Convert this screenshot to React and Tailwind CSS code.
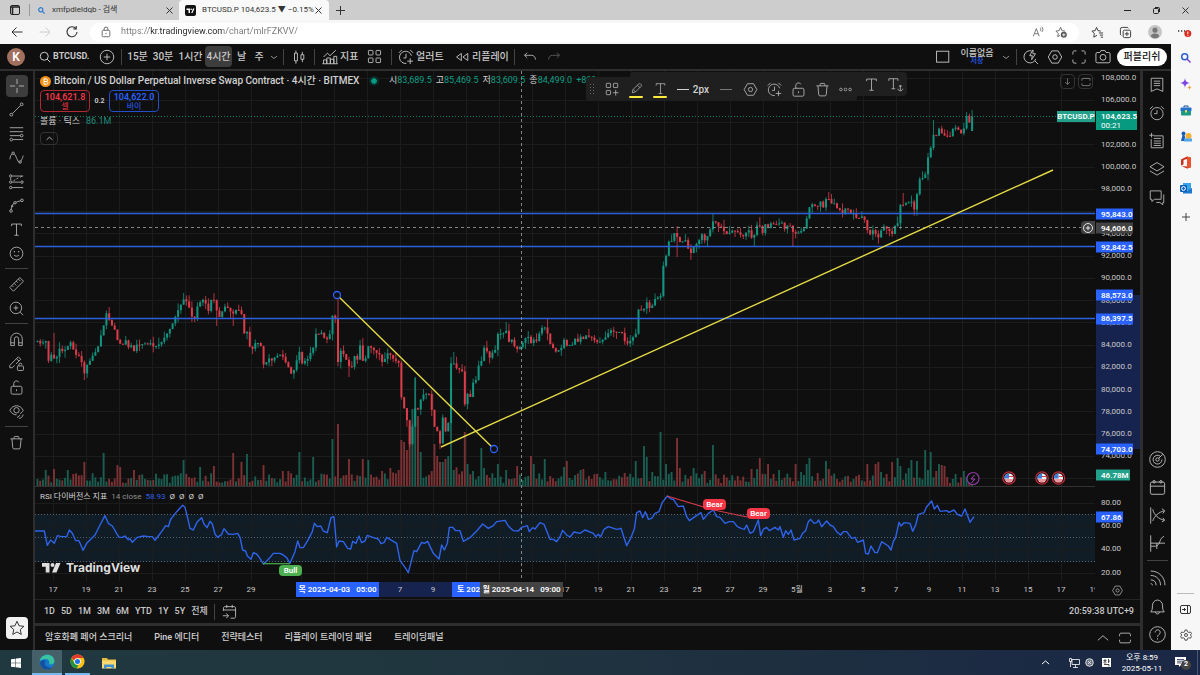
import React from "react";

/* ---------- chart data ---------- */

// Chart space: x 35..1095, y 71..581. Traces are stored as runs of
// "x,y" pairs in thirds of a unit, relative to the origin of their run.
const trace = (runs) =>
  runs.flatMap(([ox, oy, text]) =>
    text.split(" ").map((pair) => {
      const [x, y] = pair.split(",").map(Number);
      return [ox + x / 3, oy + y / 3];
    })
  );

const PRICE = trace([
  [0, 140, "105,606 140,606 144,672 152,640 167,665 175,628 183,632 192,630 200,633 208,600 217,618 225,648 240,645 252,700 260,678 270,660 283,645 292,632 300,595 310,565 318,517 325,530 331,555 343,565 352,595 358,612 372,612 375,600 385,620 395,620 400,635 410,617 425,612 433,608 445,612 457,615 465,625 475,615 487,605 497,590 505,580 515,555 525,535 533,515 540,497 548,475 556,478 565,490 573,530 583,535 592,500 600,490 608,480 617,495 625,512 634,480 645,483 652,528 660,530 668,510 675,498 683,500 692,520 700,522 708,510 718,515 727,525 733,578 742,578 748,620 757,625 768,605 775,610 785,625 790,672 798,672 805,660 818,660 828,650 838,645 850,655 860,668 868,690 875,700 885,685"],
  [290, 270, "5,310 15,290 27,245 37,280 50,272 60,250 70,235 76,187 85,195 97,190 107,212 117,212 125,140 135,132 143,280 152,245 165,250 175,290 185,297 193,255 202,268 210,228 218,270 228,265 235,225 245,238 257,245 268,250 275,275 285,268 295,247 307,260 320,272 328,280 333,375 342,410 350,440 358,525 367,475 374,415 382,428 390,398 398,372 408,370 415,362 423,410 432,465 445,490 450,525 457,437 467,488 475,455 480,290 488,275 497,290 507,300 516,298 523,405 530,375 543,380 548,340 558,325 565,290 575,275 580,232 590,240 600,265 608,245 617,240 623,195 635,190 648,182 655,212 667,210 677,235 690,235 700,210 715,200 720,228 730,205 740,210 750,185 760,172 770,180 780,220 790,238 803,245 812,240 820,200 830,228 847,225 855,205 865,215 875,200"],
  [580, 270, "5,212 15,195 25,200 45,210 55,213 70,213 80,190 90,185 110,190 125,188 133,205 140,228 150,215 160,205 170,185 173,118 182,115 190,130 197,93 207,112 217,110 223,88 240,77"],
  [580, 180, "245,345 248,260 255,250 265,185 272,195 280,160 290,170 297,190 307,185 314,175 322,205 333,222 345,195 355,185 365,165 373,185 383,165 390,150 395,130 405,125 415,140 425,140 440,160 450,155 465,150 480,158 490,172 505,150 515,170 525,165 535,120 545,170 555,130 562,150 575,128 590,133 605,120 612,155 620,135 630,132 640,160 650,160 665,155 675,135 685,90 693,70 710,80 720,65 730,85 740,55 750,65 765,75 780,90 790,100 797,85 815,100 830,110 853,115 860,150 870,160 880,145 890,170"],
  [880, 90, "0,440 7,408 17,415 25,420 35,440 45,410 55,400 60,340 70,350 80,335 95,333 102,362 108,335 117,265 135,258 142,208 150,190 158,122 166,150 175,115 183,132 192,135 200,140 212,135 222,110 230,120 240,128 250,130 258,72 265,90 275,118 282,80"],
]);

const RSI = trace([
  [0, 480, "105,153 133,153 142,196 152,180 163,190 172,167 185,170 200,170 208,150 217,160 227,182 237,182 249,211 260,190 270,180 285,165 300,135 315,107 325,130 337,138 357,172 367,172 375,168 385,179 390,176 397,187 412,172 430,168 445,170 457,170 465,181 475,168 487,152 497,137 505,140 512,118 530,95 548,76 555,82 562,110 570,145 580,150 592,125 605,113 612,132 621,143 630,124 637,132 645,162 653,172 665,163 672,146 685,162 700,163 713,160 720,172 728,210 737,213 742,228 753,238 760,218 770,222 780,235 790,252 800,243 808,235 820,220 840,220 850,225 860,233 870,250 885,215 893,183"],
  [300, 480, "0,203 10,203 25,178 37,155 43,130 52,140 62,138 70,153 82,158 93,113 102,110 110,201 117,183 130,185 143,205 152,207 158,184 168,190 177,168 185,188 195,183 202,166 220,173 235,177 243,191 252,188 260,172 290,190 300,241 315,262 325,278 342,212 350,215 365,187 373,190 383,184 400,220 417,237 425,195 433,210 442,190 448,142 458,142 467,152 480,152 490,184 510,173 530,153 548,132 565,145 580,137 590,125 615,121 625,138 640,152 655,153 665,142 682,137 688,155 698,143 705,147 720,128 732,133 750,178 760,178 770,185 780,170 788,151 800,165 810,171 822,156 840,160 855,150 880,160 887,170 895,163"],
  [600, 480, "2,170 12,148 25,140 50,148 63,145 80,197 92,175 103,147 110,98 120,93 128,113 136,95 145,118 155,115 165,100 177,95 187,67 202,48 213,57 220,58 235,80 250,78 260,110 268,122 285,110 303,98 310,118 325,100 340,90 350,110 360,112 375,130 388,125 400,125 412,140 425,146 433,148 440,135 450,160 460,155 475,120 482,167 490,148 500,142 508,152 525,142 535,150 540,140 550,172 557,152 565,163 573,150 582,180 600,175 608,160 617,152 625,125 632,118 642,130 650,128 656,120 665,140 680,123 690,135 700,140 710,155 722,165 730,155 740,155 755,175 765,172 773,187 790,180 797,220 805,222 813,198 825,218 832,218"],
  [880, 320, "5,665 25,678 33,690 40,665 47,652 57,607 63,618 72,608 90,610 98,634 107,615 115,583 132,578 140,560 155,543 163,567 172,556 180,574 200,572 207,577 222,570 232,583 245,588 255,567 270,607 282,590"],
]);

// Long wicks: [x, y of the tip]
const WICKS = [
  [53, 333], [108, 307], [183, 293], [218, 326], [232, 326], [84, 378], [337, 299], [348, 377],
  [409, 447], [415, 377], [362, 338], [450, 357], [453, 352], [463, 364], [506, 322], [547, 318],
  [678, 226], [678, 257], [692, 260], [712, 213], [753, 247], [794, 247], [760, 217], [828, 192],
  [902, 193], [933, 120], [966, 112], [440, 449],
];

// Tall volume bars: origin, then [thirds of a unit, height]
const VOLUME_PEAKS = [
  [0, "140,16 158,17 200,16 250,24 308,33 350,21 357,19 399,16 547,26 597,19 645,20 697,33 727,24 745,32 787,21 852,15 862,15 895,34"],
  [290, "27,34 73,29 125,47 140,62 173,27 215,27 222,49 232,26 273,15 323,16 331,46 339,44 347,36 357,60 366,77 374,108 382,70 390,34 430,42 438,30 446,24 455,24 463,27 471,30 480,65 488,16 521,54 530,22 547,15 570,38 580,18 620,22 645,16 685,20 720,30 728,22 768,27 820,19 828,25 868,16 877,17"],
  [580, "5,17 80,14 138,13 170,25 195,40 203,29 220,14 245,54 255,22 262,32 276,14 295,48 303,18 337,18 345,20 370,15 395,41 403,14 518,17 535,17 543,28 567,22 600,16 643,22 665,14 683,22 690,28 740,25 750,17 858,22 865,18 890,22 905,14"],
  [880, "-1,24 5,14 40,24 55,28 65,20 90,18 98,26 113,25 138,36 147,16 155,34 170,15 180,22 188,21 195,20 230,12 255,15"],
].flatMap(([ox, text]) =>
  text.split(" ").map((pair) => {
    const [x, h] = pair.split(",").map(Number);
    return [ox + x / 3, h];
  })
);

const noise = (n) => {
  const v = Math.sin(n * 127.1 + 31.7) * 43758.5453;
  return v - Math.floor(v);
};

const sample = (points, x) => {
  if (x <= points[0][0]) return points[0][1];
  for (let i = 1; i < points.length; i++) {
    if (x <= points[i][0]) {
      const [x0, y0] = points[i - 1];
      const [x1, y1] = points[i];
      return y0 + ((y1 - y0) * (x - x0)) / (x1 - x0 || 1);
    }
  }
  return points[points.length - 1][1];
};

const STEP = 2.757;
const CANDLES = Array.from({ length: 340 }, (_, i) => {
  const x = 37.5 + i * STEP;
  const last = i === 339;
  const open = last ? 131 : sample(PRICE, x - STEP) + (noise(i - 1) - 0.5) * 3;
  const close = last ? 116.5 : sample(PRICE, x) + (noise(i) - 0.5) * 3;
  let high = Math.min(open, close) - noise(i + 500) ** 2 * 7;
  let low = Math.max(open, close) + (last ? 0 : noise(i + 900) ** 2 * 7);
  for (const [wx, wy] of WICKS) {
    if (Math.abs(wx - x) < STEP / 2) {
      high = Math.min(high, wy);
      low = Math.max(low, wy);
    }
  }
  const peak = VOLUME_PEAKS.find(([px]) => Math.abs(px - x) <= STEP / 2);
  const busy = x > 390 && x < 480 ? 8 : 0;
  const volume = peak ? peak[1] : 3 + noise(i + 1300) * 10 + busy * noise(i + 70);
  return { x, open, close, high, low, volume, up: close <= open };
});

const GRID_X = [
  ...Array.from({ length: 7 }, (_, i) => 53 + i * 33.07),
  ...Array.from({ length: 24 }, (_, i) => 301 + i * 33.07),
];
const HIDDEN_TICKS = ["104,000.0", "96,000.0"];
const PRICE_TICKS = Array.from({ length: 18 }, (_, i) => ({
  value: `${108 - i * 2},000.0`,
  y: 78 + i * 22.25,
})).filter((t) => !HIDDEN_TICKS.includes(t.value));
const RSI_TICKS = [["80.00", 503], ["60.00", 526], ["40.00", 549], ["20.00", 573]];
const DAYS = [
  ["17", 53], ["19", 86], ["21", 119], ["23", 152], ["25", 185], ["27", 218], ["29", 251],
  ["7", 400], ["9", 433], ["17", 565], ["19", 598], ["21", 631], ["23", 664], ["25", 697],
  ["27", 730], ["29", 763], ["5월", 797], ["3", 830], ["5", 863], ["7", 896], ["9", 929],
  ["11", 962], ["13", 995], ["15", 1028], ["17", 1061], ["19", 1094],
];
const left = (x) => `${((x - 35) / 1060) * 100}%`;
const top = (y) => `${((y - 71) / 510) * 100}%`;

/* ---------- icons ---------- */

const Icon = ({ children, size = 18, w = 1.4, className = "" }) => (
  <svg width={size} height={size} viewBox="0 0 28 28" fill="none" stroke="currentColor" strokeWidth={w} className={`shrink-0 ${className}`} aria-hidden="true">
    {children}
  </svg>
);

const I = {
  cross: <path d="M14 3v8M14 17v8M3 14h8M17 14h8" />,
  trend: <><path d="M7.5 20.5l13-13" /><circle cx="5.5" cy="22.5" r="2.3" /><circle cx="22.5" cy="5.5" r="2.3" /></>,
  fib: <><path d="M3 4.5h22M3 11h22M3 17.5h17M8 24h17" /><circle cx="22.5" cy="17.5" r="2.2" /><circle cx="5.5" cy="24" r="2.2" /></>,
  wave: <><path d="M3 17c1-6 2-8 4-9M10 8c4 3 5 13 9 14M21 20c2-3 3-5 4-9" /><circle cx="8.5" cy="7" r="2" /><circle cx="20" cy="21.5" r="2" /></>,
  forecast: <><path d="M7 5h18M7 15h13M7 24h18M4.5 8v4M9 13l3-2M14 10l3-2M20 7l3-2" /><circle cx="4.5" cy="5" r="2" /><circle cx="4.5" cy="15" r="2" /><circle cx="4.5" cy="24" r="2" /><circle cx="23" cy="15" r="2" /></>,
  brush: <><path d="M5 21c1-6 3-9 5-11M13.5 8.500L21 6" /><circle cx="5" cy="23" r="2.200" /><circle cx="11.500" cy="9.500" r="2" /><circle cx="7" cy="15" r="1.200" /><circle cx="23" cy="5.500" r="2.200" /></>,
  text: <path d="M6 8.500V5h16v3.500M14 5v18.500M10.500 23.500h7" />,
  smile: <><circle cx="14" cy="14" r="10.500" /><path d="M10 16.500c1 2.500 7 2.500 8 0" /><path d="M10.500 11h.1M17.500 11h.1" strokeLinecap="round" strokeWidth="2.200" /></>,
  ruler: <path d="M3 19L19.500 2.500l6 6L9 25zM6.500 15.500l2.500 2.500M10 12l3.500 3.500M13.500 8.500L16 11M17 5l3.500 3.500" strokeLinejoin="round" />,
  zoom: <><circle cx="13" cy="13" r="9.500" /><path d="M20 20l5 5M13 9v8M9 13h8" /></>,
  magnet: <path d="M4.500 24V13a9.500 9.500 0 0119 0v11h-6V13a3.500 3.500 0 00-7 0v11zM4.500 19.500h6M17.500 19.500h6" />,
  penLock: <><path d="M3 21v-4L17 3l4 4-8 8M3 21h4l4-4M14 6l4 4" /><rect x="15.500" y="18" width="10" height="7.500" rx="1.500" /><path d="M18 18v-2a2.500 2.500 0 015 0" /></>,
  lock: <><rect x="5" y="12" width="18" height="13" rx="2.500" /><path d="M9.500 12V7.500a4.500 4.500 0 018.500-2M14 17v3" /></>,
  eye: <><path d="M3 12c5-10 17-10 22 0-1 2.500-3 4.500-5 5.500M3 12c3 5.500 7 7.500 11 7.500" /><circle cx="14" cy="12" r="4.500" /><path d="M15 24l5-4M18 25c3 1 6-2 7-6" /></>,
  trash: <path d="M4 8h20M10 8V5.500c0-.8.700-1.500 1.500-1.500h5c.8 0 1.500.7 1.500 1.500V8M6.500 8l1.300 14.500c.1 1.200 1 2 2.200 2h8c1.200 0 2.100-.8 2.200-2L21.500 8" />,
  star: <path d="M14 3.500l3.200 7 7.500.9-5.600 5.100 1.500 7.500-6.600-3.800-6.600 3.800 1.500-7.500-5.600-5.100 7.500-.9z" strokeLinejoin="round" />,
  list: <path d="M5 3.500h18v20.500l-9-4-9 4zM9 8h10M9 11.500h10M9 15h10" />,
  alarm: <><circle cx="14" cy="15" r="9.500" /><path d="M14 9.500V15h-4.500M3 8l4.500-4.500M25 8l-4.500-4.500" /></>,
  alarmPlus: <><path d="M22.500 12a9.500 9.500 0 10-8 12M14 9v6.500h-4M3 7.500L7.500 3M25 7.500L20.500 3M20.500 16v9M16 20.500h9" /></>,
  note: <><path d="M9 6h14.500v18.500H5V11M2 5h7M5.500 1.500v7M9 10h11M9 14h11M9 17.500h11M9 21h11" /></>,
  layers: <path d="M3 10.500L14 4l11 6.500L14 17zM3 17l11 6.500L25 17" strokeLinejoin="round" />,
  chat: <path d="M3.500 4.500h17v13H10l-4 3.500v-3.500H3.500zM24.500 10v12.500H23V26l-4.500-3.500H13" />,
  target: <><circle cx="14" cy="14" r="11.500" /><path d="M18.500 9.500A6.500 6.500 0 1020.500 14" /><circle cx="14" cy="14" r="2.500" /><path d="M15.500 12.500l6-6" /></>,
  calendar: <><rect x="3.500" y="6" width="21" height="18" rx="2.500" /><path d="M3.500 12h21" /><circle cx="9" cy="5.500" r="1.800" /><circle cx="19" cy="5.500" r="1.800" /></>,
  options: <path d="M4 2v24M7 5c2 9 9 14 17 16M7 22C9 15 16 9 24 7M20.500 4l4 3-2.500 4M22 17.500l2.500 3.500-4 2.500" />,
  pine: <path d="M4 2v24M4 13.500h21M4 18h7c3 0 5-3 6.500-7 1.500-4 3-6.500 6-7.500M13 22V13.500" />,
  rss: <path d="M4 3c12 0 21 9 21 21M4 9.500c8.500 0 14.500 6 14.500 14.500M4 16c5 0 8 3 8 8M4 21.500c1.500 0 2.500 1 2.500 2.500" />,
  bell: <path d="M4 22h20c-2-2-2.500-4-2.500-9 0-4.500-3-8.500-7.500-8.500S6.500 8.500 6.500 13c0 5-.5 7-2.500 9zM11 22c0 4 6 4 6 0" strokeLinejoin="round" />,
  help: <><circle cx="14" cy="14" r="11.500" /><path d="M10.500 11c0-5 7.500-5 7.500 0 0 3-4 3-4 6.500M14 19.500v2" /></>,
  search: <><circle cx="12.500" cy="12.500" r="8" /><path d="M18.500 18.500l6 6" /></>,
  plusCircle: <><circle cx="14" cy="14" r="10.500" /><path d="M14 9v10M9 14h10" /></>,
  chevDown: <path d="M8 12l6 5 6-5" />,
  chevUp: <path d="M5 18l9-8 9 8" />,
  candles: <path d="M7 8h4.500v12H7zM9.200 4v4M9.200 20v4.500M17 10.500h4.500v7H17zM19.200 6v4.500M19.200 17.500V22" />,
  indicators: <path d="M4 24.500v-6h5v6M9 24.500v-9h5.500v9M14.500 24.500v-7H20v7M20 24.500V13h4.500v11.500M2 24.500h24M4 14l6-6 4 4 9-8.500" strokeLinejoin="round" />,
  grid: <><rect x="4" y="4" width="7.500" height="7.500" rx="1" /><rect x="16.500" y="4" width="7.500" height="7.500" rx="1" /><rect x="4" y="16.500" width="7.500" height="7.500" rx="1" /><rect x="16.500" y="16.500" width="7.500" height="7.500" rx="1" /></>,
  gridPlus: <><rect x="4" y="4" width="7.500" height="7.500" rx="1" /><rect x="16.500" y="4" width="7.500" height="7.500" rx="1" /><rect x="4" y="16.500" width="7.500" height="7.500" rx="1" /><path d="M20.500 15.500v10M15.500 20.500h10" /></>,
  replay: <path d="M13 8.500v11L5.500 14zM23 8.500v11L15.500 14z" strokeLinejoin="round" />,
  undo: <path d="M9 6.500L4.500 11 9 15.500M4.500 11h12c4 0 7 3 7 7.500" />,
  redo: <path d="M19 6.500l4.500 4.500-4.500 4.500M23.500 11h-12c-4 0-7 3-7 7.500" />,
  square: <rect x="4" y="5" width="19" height="17" />,
  quick: <><path d="M15 4.500A9.500 9.500 0 1021.500 17M20 20l5 5" /><path d="M17 3l-5 9h4l-1 6 6-9h-4z" strokeLinejoin="round" /></>,
  hex: <><path d="M9 4.500h10l5.500 9.500L19 23.500H9L3.500 14z" strokeLinejoin="round" /><circle cx="14" cy="14" r="3.500" /></>,
  full: <path d="M4.500 10V7c0-1.400 1-2.500 2.500-2.500h3M18 4.500h3c1.400 0 2.500 1 2.500 2.500v3M23.500 18v3c0 1.400-1 2.500-2.500 2.500h-3M10 23.500H7A2.500 2.500 0 014.500 21v-3" />,
  camera: <><path d="M3 9c0-1.200.8-2 2-2h4l2-3h6l2 3h4c1.200 0 2 .8 2 2v12c0 1.200-.8 2-2 2H5c-1.200 0-2-.8-2-2z" /><circle cx="14" cy="14.500" r="4.500" /></>,
  pencil: <path d="M6 22l1.500-6L18 5.500c1-1 2.500-1 3.500 0l1 1c1 1 1 2.500 0 3.500L12 20.500zM16 8l4.500 4.500M8 16l4 4" strokeLinejoin="round" />,
  anchorT: <><path d="M3 8V4.500h15V8M10.500 4.500V21M7.500 21h6M22 15v9M19.500 16.500h5M18 21c.5 4.500 7.500 4.500 8 0" /></>,
  dots: <><circle cx="5.500" cy="14" r="2.500" /><circle cx="14" cy="14" r="2.500" /><circle cx="22.500" cy="14" r="2.500" /></>,
  down: <path d="M14 6v15M8 15.500l6 6 6-6" />,
  maxi: <path d="M4.500 11V8c0-1.500 1-2.500 2.500-2.500h14c1.500 0 2.500 1 2.500 2.500v3M23.500 17v3c0 1.500-1 2.500-2.500 2.500H7A2.500 2.500 0 014.500 20v-3" />,
  goto: <path d="M4 13V8.500C4 7 5 6 6.500 6h15C23 6 24 7 24 8.500v14c0 1.500-1 2.500-2.500 2.500H16M4 11.500h20M9.500 3v5M18.500 3v5M3 21h9M8.500 17l4 4-4 4" />,
};

const Sep = ({ className = "" }) => <span className={`h-4 w-px shrink-0 bg-[#434343] ${className}`} />;

const Tool = ({ label, icon, className = "", size, children }) => (
  <button type="button" aria-label={label} title={label} className={`flex shrink-0 items-center justify-center ${className}`}>
    {icon && <Icon size={size}>{icon}</Icon>}
    {children}
  </button>
);

/* ---------- browser chrome ---------- */

const Close = ({ className = "" }) => (
  <svg width="7" height="7" viewBox="0 0 7 7" stroke="currentColor" strokeWidth="1" className={className} aria-hidden="true"><path d="M.5.5l6 6M6.500.5l-6 6" /></svg>
);

function TabStrip() {
  return (
    <header className="flex h-5 items-stretch bg-[#cdcdcd] text-[8px] text-[#333]">
      <Tool label="탭 작업 메뉴" className="w-[29px]">
        <svg width="10" height="10" viewBox="0 0 10 10" fill="none" stroke="#222" aria-hidden="true"><rect x=".5" y=".5" width="9" height="9" rx="1.500" /><path d="M.5 2h9M2.500 2v7" strokeWidth="1.500" /></svg>
      </Tool>
      <span className="my-1 w-px bg-[#999]" />
      <div className="flex w-[149px] items-center pl-2">
        <svg width="7" height="7" viewBox="0 0 7 7" fill="none" stroke="#2b7cd3" strokeWidth="1.200" aria-hidden="true"><circle cx="2.800" cy="2.800" r="2.100" /><path d="M4.300 4.300l2.300 2.300" /></svg>
        <span className="ml-[7px] flex-1 whitespace-nowrap">xmfpdleldqb - 검색</span>
        <button type="button" aria-label="탭 닫기" className="mr-[6px]"><Close /></button>
      </div>
      <div className="flex w-[150px] items-center rounded-t bg-[#f9f9f9] pl-[6px]">
        <svg width="11" height="11" viewBox="0 0 11 11" aria-hidden="true"><rect width="11" height="11" rx="2" fill="#111" /><path d="M1.500 3.500h3.500v4.500H3.500V5h-2zM7.500 8l2-4.500H8L6.200 8z" fill="#fff" /><circle cx="6.200" cy="4.200" r=".8" fill="#fff" /></svg>
        <span className="ml-[6px] whitespace-nowrap">BTCUSD.P 104,623.5 ▼ −0.15%</span>
        <button type="button" aria-label="탭 닫기" className="ml-auto mr-[7px]"><Close /></button>
      </div>
      <Tool label="새 탭" className="w-[22px]">
        <svg width="9" height="9" viewBox="0 0 9 9" stroke="#333" aria-hidden="true"><path d="M4.500 0v9M0 4.500h9" /></svg>
      </Tool>
      <div className="ml-auto flex">
        <Tool label="최소화" className="w-[29px]"><svg width="7" height="7" viewBox="0 0 7 7" stroke="#222" aria-hidden="true"><path d="M0 3.500h7" /></svg></Tool>
        <Tool label="이전 크기로" className="w-[29px]"><svg width="7" height="7" viewBox="0 0 7 7" fill="none" stroke="#222" aria-hidden="true"><rect x=".5" y="1.500" width="5" height="5" rx="1" /><path d="M2 .5h3.500a1 1 0 011 1V5" /></svg></Tool>
        <Tool label="닫기" className="w-[29px]"><Close /></Tool>
      </div>
    </header>
  );
}

function AddressBar() {
  return (
    <div className="flex h-6 items-center bg-[#f7f7f7] text-[#333]">
      <Tool label="뒤로" className="w-[34px]"><Icon size={14} w={2}><path d="M4 14h21M13 5l-9 9 9 9" /></Icon></Tool>
      <Tool label="앞으로" className="w-[22px] text-[#ccc]"><Icon size={14} w={2}><path d="M3 14h21M15 5l9 9-9 9" /></Icon></Tool>
      <Tool label="새로 고침" className="ml-[5px] mr-[7px] w-[22px]"><Icon size={14} w={2.2}><path d="M22 7.500A10 10 0 1024 14M22.500 2v6h-6" /></Icon></Tool>
      <form className="flex h-[19px] flex-1 items-center rounded-full bg-white pl-[10px] pr-[6px]">
        <Icon size={12} w={2} className="text-[#555]"><rect x="5" y="10" width="18" height="15" rx="3" /><path d="M9.500 10V7a4.500 4.500 0 019 0v3M14 16v3" /></Icon>
        <input
          aria-label="주소 및 검색창"
          defaultValue="https://kr.tradingview.com/chart/mIrFZKVV/"
          className="ml-[9px] min-w-0 flex-1 bg-[linear-gradient(90deg,#777_0_28px,#222_28px_101px,#777_101px)] bg-clip-text text-[9px] text-transparent outline-none"
        />
        <Tool label="소리 내어 읽기" className="w-[22px] text-[#666]"><Icon size={12} w={2}><path d="M3 24L10 6l7 18M6 18h8M19 4c2 2 2 6 0 8M23 2c3 3 3 9 0 12" /></Icon></Tool>
        <Tool label="즐겨찾기에 추가" className="w-[24px] text-[#555]"><Icon size={13} w={1.8}><path d="M12 3l3 7 7 1M12 3L9 10l-7 1 5 5-1 7 5-3" /><circle cx="19" cy="19" r="6.500" fill="#555" stroke="none" /><path d="M19 15.500v7M15.500 19h7" stroke="#fff" /></Icon></Tool>
      </form>
      <Tool label="즐겨찾기" className="ml-[5px] w-[27px]"><Icon size={13} w={2}><path d="M12 3l3 7 6 1M12 3L9 10l-7 1 5 5-1 8 7-4M17 15h9M19 19.500h7M21 24h5" /></Icon></Tool>
      <Tool label="컬렉션" className="w-[29px]"><Icon size={13} w={2}><rect x="9" y="9" width="16" height="16" rx="3" /><path d="M17 12.500v9M12.500 17h9M5 20a3 3 0 01-2-3V7a4 4 0 014-4h10a3 3 0 013 2" /></Icon></Tool>
      <Tool label="프로필" className="w-[29px]">
        <svg width="14" height="14" viewBox="0 0 15 15" aria-hidden="true"><circle cx="7.500" cy="7.500" r="7.500" fill="#c6c6c6" /><circle cx="7.500" cy="5.500" r="2.700" fill="#777" /><path d="M3 12c0-4 9-4 9 0-2 3-7 3-9 0z" fill="#777" /></svg>
      </Tool>
      <Tool label="설정 및 기타" className="w-[31px]">
        <svg width="14" height="12" viewBox="0 0 14 12" aria-hidden="true"><path d="M0 5h1.300M3 5h1.300M6 5h1" stroke="#333" strokeWidth="1.300" /><circle cx="9.800" cy="7.500" r="3.500" fill="#d93025" /><path d="M9.800 5.500v2.400M9.800 8.700v1" stroke="#fff" /></svg>
      </Tool>
    </div>
  );
}

function EdgeSidebar() {
  const item = "flex h-[26px] items-center justify-center";
  return (
    <aside className="flex w-[29px] shrink-0 flex-col bg-[#f7f7f7] text-[#444]">
      <button type="button" aria-label="검색" className={`${item} mt-px`}><Icon size={12} w={3.500} className="text-[#2b5fd0]"><circle cx="11" cy="11" r="7" /><path d="M16.500 16.500l8 8" stroke="#7a3fd0" /></Icon></button>
      <button type="button" aria-label="검색 도우미" className={item}><svg width="12" height="12" viewBox="0 0 12 12" aria-hidden="true"><path d="M5 0c.6 3.500 1.500 4.400 5 5-3.500.6-4.400 1.500-5 5-.6-3.500-1.500-4.400-5-5 3.500-.6 4.400-1.500 5-5z" fill="#7a45e0" /><path d="M9.500 7c.3 1.700.8 2.200 2.500 2.500-1.700.3-2.200.8-2.500 2.500-.3-1.700-.8-2.200-2.500-2.500 1.700-.3 2.200-.8 2.500-2.500z" fill="#e8a33d" /></svg></button>
      <button type="button" aria-label="도구" className={item}><svg width="12" height="11" viewBox="0 0 12 11" aria-hidden="true"><path d="M4 2.500V1h4v1.500" fill="none" stroke="#18488c" /><rect x=".5" y="2.500" width="11" height="4" rx="1" fill="#2272c9" /><rect x="1" y="6" width="10" height="4.500" rx="1" fill="#1b9a86" /><rect x="5" y="5" width="2" height="2.500" fill="#ffd35c" /></svg></button>
      <button type="button" aria-label="게임" className={item}><svg width="12" height="11" viewBox="0 0 12 11" aria-hidden="true"><circle cx="3.500" cy="2.500" r="2" fill="#1b5fb4" /><path d="M2.500 4h2l1.500 6H1z" fill="#1b5fb4" /><circle cx="8.500" cy="5" r="3" fill="#f2b134" /><rect x="4" y="7.500" width="8" height="3" fill="#4fa3e8" /></svg></button>
      <button type="button" aria-label="Microsoft 365" className={item}><svg width="12" height="13" viewBox="0 0 12 13" aria-hidden="true"><path d="M1 3.500L7 .5l4 1.300v9.400L7 12.500 1.500 10 7 10.500V3L3.500 4v4.500L1 9.500z" fill="#c4301a" /><path d="M7 .5l4 1.300v9.400L7 12.500z" fill="#e9502c" /></svg></button>
      <button type="button" aria-label="Outlook" className={item}><svg width="12" height="12" viewBox="0 0 12 12" aria-hidden="true"><rect x="3" y="1" width="8" height="7" fill="#35a5ea" /><path d="M3 6l4.500 2.500L12 6v5.500H3z" fill="#1c78cf" /><rect y="3" width="7" height="7" rx="1" fill="#0f62b8" /><circle cx="3.500" cy="6.500" r="1.900" fill="none" stroke="#fff" /></svg></button>
      <button type="button" aria-label="추가" className={`${item} mt-[3px]`}><svg width="8" height="8" viewBox="0 0 8 8" stroke="#444" aria-hidden="true"><path d="M4 0v8M0 4h8" /></svg></button>
      <div className="mx-[6px] mt-auto border-t border-[#bbb]" />
      <button type="button" aria-label="사이드바 숨기기" className={`${item} mt-[2px]`}><svg width="11" height="9" viewBox="0 0 11 9" fill="none" stroke="#333" aria-hidden="true"><rect x=".5" y=".5" width="10" height="8" rx="1.500" /><path d="M7.500.5v8M2 4.500h3.500M4 3l1.500 1.500L4 6" /></svg></button>
      <button type="button" aria-label="설정" className={`${item} mb-[2px]`}><Icon size={12} w={2.2}><circle cx="14" cy="14" r="3.500" /><path d="M11.500 2.500h5l1 4 3 1.500 4-1 2.500 4-3 3 3 3-2.500 4.500-4-1-3 1.500-1 4h-5l-1-4-3-1.500-4 1L1.500 17l3-3-3-3L4 7l4 1 3-1.500z" strokeLinejoin="round" /></Icon></button>
    </aside>
  );
}

/* ---------- trading workspace ---------- */

function TopToolbar() {
  const interval = "flex h-[21px] shrink-0 items-center justify-center whitespace-nowrap rounded";
  return (
    <div className="flex h-[27px] items-center border-b-2 border-[#2e2e2e] bg-[#0f0f0f] text-[10px] font-medium text-[#c9c9c9]">
      <Tool label="계정 메뉴" className="w-8"><span className="flex size-[18px] items-center justify-center rounded-full bg-[#a1705f] text-[12px] font-semibold text-white">K</span></Tool>
      <button type="button" aria-label="심볼 검색" className="ml-[6px] flex w-[52px] items-center"><Icon size={14} w={2}>{I.search}</Icon><span className="ml-px w-[36px] overflow-hidden whitespace-nowrap text-left text-[9px] font-bold">BTCUSD.P</span></button>
      <Tool label="심볼 비교" icon={I.plusCircle} className="ml-[5px] w-6" />
      <Sep className="ml-[2px]" />
      <button type="button" className={`${interval} ml-[3px] w-[25px]`}>15분</button>
      <button type="button" className={`${interval} w-[26px]`}>30분</button>
      <button type="button" className={`${interval} w-[29px]`}>1시간</button>
      <button type="button" className={`${interval} w-[27px] bg-[#3d3d3d]`}>4시간</button>
      <button type="button" className={`${interval} w-[19px]`}>날</button>
      <button type="button" className={`${interval} w-[16px]`}>주</button>
      <Tool label="차트 인터벌" icon={I.chevDown} size={14} className="w-[14px]" />
      <Sep className="ml-[2px]" />
      <Tool label="바 스타일" icon={I.candles} className="w-[30px]" />
      <Sep />
      <button type="button" className="ml-[6px] flex w-[38px] items-center gap-px whitespace-nowrap"><Icon>{I.indicators}</Icon>지표</button>
      <Tool label="지표 템플릿" icon={I.grid} size={17} className="w-[31px]" />
      <Sep className="ml-px" />
      <button type="button" className="ml-[5px] flex w-[54px] items-center gap-px whitespace-nowrap"><Icon>{I.alarmPlus}</Icon>얼러트</button>
      <button type="button" className="ml-[2px] flex w-[58px] items-center gap-px whitespace-nowrap"><Icon>{I.replay}</Icon>리플레이</button>
      <Sep className="ml-[3px]" />
      <Tool label="실행 취소" icon={I.undo} size={16} className="ml-[3px] w-6" />
      <Tool label="다시 실행" icon={I.redo} size={16} className="w-6 text-[#666]" />
      <div className="ml-auto flex items-center pr-1">
        <Tool label="레이아웃 셋업" icon={I.square} className="w-6" />
        <button type="button" className="ml-[3px] flex w-[38px] flex-col items-center whitespace-nowrap text-[9px] leading-[10px]">
          이름없음
          <span className="text-[7px] leading-[7px] text-[#2962ff]">저장</span>
        </button>
        <Tool label="레이아웃 관리" icon={I.chevDown} size={14} className="ml-[3px] w-[14px]" />
        <Sep className="ml-[3px]" />
        <Tool label="빠른 검색" icon={I.quick} className="ml-[2px] w-6" />
        <Tool label="설정" icon={I.hex} className="w-6" />
        <Tool label="전체 화면" icon={I.full} className="w-6" />
        <Tool label="스냅샷" icon={I.camera} className="w-6" />
        <button type="button" className="ml-[2px] h-[18px] w-[50px] whitespace-nowrap rounded-full bg-white text-[10px] text-[#111]">퍼블리쉬</button>
      </div>
    </div>
  );
}

function DrawingTools() {
  const groups = [
    [["추세줄", I.trend], ["피보나치", I.fib], ["패턴", I.wave], ["예측", I.forecast], ["브러쉬", I.brush], ["텍스트", I.text], ["아이콘", I.smile]],
    [["자", I.ruler], ["줌인", I.zoom]],
    [["자석 모드", I.magnet], ["그리기 모드 유지", I.penLock], ["모두 잠그기", I.lock], ["모두 숨기기", I.eye]],
    [["없애기", I.trash]],
  ];
  return (
    <nav aria-label="그리기 도구" className="flex w-[35px] shrink-0 flex-col items-center border-r-2 border-[#2e2e2e] bg-[#0f0f0f] pt-[4px] text-[#b8b8b8]">
      <Tool label="크로스" icon={I.cross} className="size-[22px] rounded bg-[#3d3d3d]" />
      {groups.map((group, g) => (
        <React.Fragment key={g}>
          {g > 0 && <span className="my-[3px] h-px w-[23px] bg-[#434343]" />}
          {group.map(([label, icon]) => <Tool key={label} label={label} icon={icon} size={17} className="h-6 w-full" />)}
        </React.Fragment>
      ))}
      <Tool label="즐겨찾기 툴바" icon={I.star} className="mb-[11px] mt-auto size-[22px] rounded bg-[#f2f2f2] text-[#222]" />
    </nav>
  );
}

function RightTools() {
  const item = "h-7 w-full";
  return (
    <nav aria-label="위젯" className="flex w-[31px] shrink-0 flex-col items-center border-l-3 border-[#2e2e2e] bg-[#0f0f0f] pb-[2px] text-[#b8b8b8]">
      {[["왓치리스트", I.list], ["얼러트", I.alarm], ["노트", I.note], ["오브젝트 트리", I.layers], ["챗", I.chat]].map(([l, i]) => <Tool key={l} label={l} icon={i} size={18} className={item} />)}
      <div className="mt-auto" />
      {[["스크리너", I.target], ["캘린더", I.calendar], ["옵션", I.options], ["파인", I.pine]].map(([l, i]) => <Tool key={l} label={l} icon={i} size={19} className={item} />)}
      <span className="my-[3px] h-px w-[21px] bg-[#434343]" />
      {[["피드", I.rss], ["알림", I.bell], ["도움말", I.help]].map(([l, i]) => <Tool key={l} label={l} icon={i} size={19} className={item} />)}
    </nav>
  );
}

function Flag({ x }) {
  return (
    <g>
      <circle cx={x} cy="478" r="6.200" fill="#0f0f0f" stroke="#c22b38" strokeWidth="1.300" />
      <circle cx={x} cy="478" r="4.600" fill="#f2f2f2" />
      <path d={`M${x} 476.500h4.500M${x - 4} 480h8M${x - 2.500} 482h5`} stroke="#e23b4b" strokeWidth="1" />
      <path d={`M${x} 478.500V473.400a4.600 4.600 0 00-4.600 5.100z`} fill="#3b7dd8" />
    </g>
  );
}

function Plot() {
  return (
    <svg viewBox="35 71 1060 510" preserveAspectRatio="none" className="absolute inset-0 size-full" role="img" aria-label="BTCUSD.P 4시간 캔들 차트와 RSI">
      <rect x="35" y="514" width="1060" height="48" fill="#101d26" />
      <g stroke="#1b1d1d" strokeWidth="1" shapeRendering="crispEdges">
        {GRID_X.map((x) => <path key={x} d={`M${x} 71V581`} />)}
        {Array.from({ length: 19 }, (_, i) => <path key={i} d={`M35 ${78 + i * 22.25}H1095`} />)}
        {RSI_TICKS.map(([v, y]) => <path key={v} d={`M35 ${y}H1095`} />)}
        <path d="M35 486.500H1095" stroke="#333" />
      </g>
      <path d="M35 514.500H1095M35 537.500H1095M35 561.500H1095" stroke="#55606a" strokeDasharray="1 2" />
      <g>
        {CANDLES.map((c, i) => (
          <rect key={i} x={c.x - 1} y={486 - c.volume} width="1.900" height={c.volume} fill={c.up ? "#1a5d51" : "#7c3234"} />
        ))}
      </g>
      <path d="M35 116.500H1095" stroke="#0b7a68" strokeDasharray="1 2" />
      <g>
        {CANDLES.map((c, i) => {
          const color = c.up ? "#129580" : "#dd3c4a";
          return (
            <g key={i}>
              <path d={`M${c.x} ${c.high}V${c.low}`} stroke={color} strokeWidth=".8" />
              <rect x={c.x - 1} y={Math.min(c.open, c.close)} width="2" height={Math.max(1, Math.abs(c.open - c.close))} fill={color} />
            </g>
          );
        })}
      </g>
      <path d="M35 213.500H1095M35 246.500H1095M35 318.500H1095" stroke="#2d5fdc" strokeWidth="1.500" />
      <path d="M35 227.500H1095M521.500 71V581" stroke="#858585" strokeDasharray="3 3" />
      <path d="M337 295L494 449M441 447L1053 170" stroke="#e3da45" strokeWidth="1.400" />
      <g fill="#0f0f0f" stroke="#2962ff" strokeWidth="1.300"><circle cx="337" cy="295" r="3.500" /><circle cx="494" cy="449" r="3.500" /></g>
      <polyline points={RSI.map((p) => p.join(",")).join(" ")} fill="none" stroke="#2f63ea" strokeWidth="1.400" strokeLinejoin="round" />
      <path d="M667 496L714 510L747 517" stroke="#d63a4a" strokeWidth="1.200" fill="none" />
      <path d="M263 563.700H290" stroke="#4caf50" strokeWidth="1.200" />
      <circle cx="973" cy="478.500" r="6" fill="#0f0f0f" stroke="#8a3a9c" strokeWidth="1.200" />
      <path d="M974.500 475l-3.500 4h4l-3.500 4" stroke="#a64bb8" fill="none" />
      <Flag x={1009} /><Flag x={1042} /><Flag x={1058.500} />
    </svg>
  );
}

function Legend() {
  const ohlc = [["시", "83,689.5"], ["고", "85,469.5"], ["저", "83,609.5"], ["종", "84,499.0"], ["", "+809."]];
  return (
    <div className="absolute left-[5px] top-[4px] flex w-[550px] flex-col text-[#d1d1d1]">
      <div className="flex h-3 items-center whitespace-nowrap">
        <svg width="11" height="11" viewBox="0 0 11 11" className="shrink-0" aria-hidden="true"><circle cx="5.500" cy="5.500" r="5.500" fill="#f7931a" /><path d="M4 3h2.300a1.200 1.200 0 010 2.500H4zM4 5.500h2.600a1.300 1.300 0 010 2.600H4zM5 2v1M5 8v1" stroke="#fff" fill="none" strokeWidth=".9" /></svg>
        <h1 className="ml-[3px] w-[308px] shrink-0 text-[10px] font-medium leading-3">Bitcoin / US Dollar Perpetual Inverse Swap Contract · 4시간 · BITMEX</h1>
        <span className="ml-[9px] mr-[12px] size-[6px] shrink-0 rounded-full bg-[#089981] outline-2 outline-[#0b2b26]" />
        {ohlc.map(([k, v]) => <span key={v} className="mr-1 text-[9px]">{k}<span className="text-[#0f9d84]">{v}</span></span>)}
      </div>
      <div className="mt-[3px] flex h-[22px] items-center text-[9px] leading-[10px]">
        <button type="button" className="flex h-full w-[50px] flex-col items-center justify-center rounded-sm border border-[#b22833] text-[#f23645]"><b className="font-semibold">104,621.8</b><span className="text-[8px] leading-[9px]">셀</span></button>
        <span className="w-[19px] text-center text-[7px] font-semibold">0.2</span>
        <button type="button" className="flex h-full w-[50px] flex-col items-center justify-center rounded-sm border border-[#2450c8] text-[#2962ff]"><b className="font-semibold">104,622.0</b><span className="text-[8px] leading-[9px]">바이</span></button>
      </div>
      <div className="mt-[4px] flex h-3 items-center gap-[6px] text-[9px]">볼륨 · 틱스 <span className="text-[#1f8a78]">86.1M</span></div>
      <button type="button" aria-label="지표 범례 접기" className="mt-[4px] flex h-[13px] w-[18px] items-center justify-center rounded-sm border border-[#333]"><Icon size={9} w={2.5}>{I.chevUp}</Icon></button>
    </div>
  );
}

function FloatingBars() {
  return (
    <>
      <div className="absolute top-px flex h-6 w-[277px] items-center justify-end rounded bg-[#1f1f1f] text-[#b8b8b8]" style={{ left: left(630) }}>
        <Tool label="텍스트" icon={I.text} size={17} className="w-[25px]" />
        <Tool label="고정 텍스트" icon={I.anchorT} size={17} className="w-[23px]" />
      </div>
      <div className="absolute top-[6px] flex h-6 w-[271px] items-center rounded bg-[#1f1f1f] text-[#b8b8b8]" style={{ left: left(586) }}>
        <svg width="14" height="10" viewBox="0 0 14 10" fill="#666" aria-hidden="true"><path d="M4 0h1v1H4zM7 0h1v1H7zM4 3h1v1H4zM7 3h1v1H7zM4 6h1v1H4zM7 6h1v1H7zM4 9h1v1H4zM7 9h1v1H7z" /></svg>
        <Tool label="템플릿" icon={I.gridPlus} size={16} className="w-6" />
        <Tool label="선 색상" className="h-full w-6 flex-col"><Icon size={15}>{I.pencil}</Icon><span className="h-[2px] w-[14px] rounded bg-[#ffeb3b]" /></Tool>
        <Tool label="텍스트 색상" className="h-full w-6 flex-col"><Icon size={15}>{I.text}</Icon><span className="h-[2px] w-[14px] rounded bg-[#ffeb3b]" /></Tool>
        <button type="button" className="flex w-[42px] items-center justify-center gap-1 text-[10px] font-medium text-[#d1d1d1]"><span className="h-px w-3 bg-current" />2px</button>
        <Tool label="선 스타일" className="w-6"><span className="h-px w-3 bg-[#777]" /></Tool>
        <Tool label="설정" icon={I.hex} size={17} className="w-6" />
        <Tool label="얼러트 추가" icon={I.alarmPlus} size={17} className="w-6" />
        <Tool label="잠그기" icon={I.lock} size={17} className="w-6" />
        <Tool label="없애기" icon={I.trash} size={17} className="w-6" />
        <Tool label="더보기" icon={I.dots} size={15} className="w-[23px]" />
      </div>
    </>
  );
}

const Marker = ({ x, y, className, children }) => (
  <span className={`absolute flex h-[11px] w-[23px] items-center justify-center rounded-sm text-[8px] font-semibold text-white ${className}`} style={{ left: left(x), top: top(y) }}>{children}</span>
);

function PriceAxis() {
  const badge = "absolute left-px flex h-[11px] -translate-y-1/2 items-center pl-[5px] text-[8px] font-semibold text-white";
  const tick = "absolute left-[6px] -translate-y-1/2 text-[8px] leading-[10px]";
  return (
    <div className="relative w-[45px] shrink-0 overflow-hidden text-[#c9c9c9]">
      <div className="absolute inset-x-0 left-px bg-[#17234f]" style={{ top: top(295), height: `${(154 / 510) * 100}%` }} />
      {PRICE_TICKS.map((t) => <span key={t.value} className={tick} style={{ top: top(t.y) }}>{t.value}</span>)}
      {RSI_TICKS.map(([v, y]) => <span key={v} className={tick} style={{ top: top(y) }}>{v}</span>)}
      <div className="absolute left-px h-[19px] w-[41px] bg-[#089981] pl-[5px] pt-px text-[8px] leading-[9px] text-white" style={{ top: top(111) }}><b className="font-semibold">104,623.5</b><br />00:21</div>
      {[["95,843.0", 214], ["92,842.5", 247], ["88,573.0", 295], ["86,397.5", 319], ["74,703.0", 449]].map(([v, y]) => (
        <span key={v} className={`${badge} w-[37px] bg-[#2962ff]`} style={{ top: top(y) }}>{v}</span>
      ))}
      <span className={`${badge} w-[37px] bg-[#434343]`} style={{ top: top(228) }}>94,606.0</span>
      <span className={`${badge} w-[34px] bg-[#22a08a]`} style={{ top: top(475) }}>46.78M</span>
      <span className={`${badge} w-[27px] bg-[#2962ff]`} style={{ top: top(517) }}>67.86</span>
    </div>
  );
}

function TimeAxis() {
  const badge = "absolute top-px flex h-[15px] items-center whitespace-pre overflow-hidden font-semibold text-white";
  return (
    <div className="flex h-[18px] text-[8px] text-[#c9c9c9]">
      <div className="relative flex-1 overflow-hidden">
        <span className="absolute top-px h-[15px] bg-[#17234f]" style={{ left: left(379), width: `${(73 / 1060) * 100}%` }} />
        {DAYS.map(([d, x]) => <span key={x} className="absolute top-[3px] -translate-x-1/2 whitespace-nowrap leading-3" style={{ left: left(x) }}>{d}</span>)}
        <span className={`${badge} w-[83px] justify-center bg-[#2962ff]`} style={{ left: left(296) }}>목 2025-04-03   05:00</span>
        <span className={`${badge} w-[28px] bg-[#2962ff] pl-[5px]`} style={{ left: left(452) }}>토 202</span>
        <span className={`${badge} w-[83px] justify-center bg-[#434343]`} style={{ left: left(480) }}>월 2025-04-14   09:00</span>
      </div>
      <Tool label="축 설정" icon={I.hex} size={13} className="w-[45px]" />
    </div>
  );
}

function Chart() {
  return (
    <section className="flex min-w-0 flex-1 flex-col bg-[#0f0f0f]">
      <div className="flex flex-1">
        <div className="relative min-w-0 flex-1 overflow-hidden">
          <Plot />
          <Legend />
          <FloatingBars />
          <div className="absolute right-[2px] top-[3px] flex gap-[3px] text-[#b8b8b8]">
            <Tool label="아래로 이동" icon={I.down} size={11} className="size-[15px] rounded-sm border border-[#333]" />
            <Tool label="차트 최대화" icon={I.maxi} size={12} className="size-[15px] rounded-sm border border-[#333]" />
          </div>
          <span className="absolute right-0 flex h-[11px] w-[38px] items-center justify-center bg-[#22a08a] text-[8px] font-semibold text-white" style={{ top: top(111) }}>BTCUSD.P</span>
          <button type="button" aria-label="가격에 추가" className="absolute right-0 flex h-[13px] w-[14px] items-center justify-center rounded-l-sm bg-[#434343] text-white" style={{ top: top(221) }}><Icon size={12} w={2}>{I.plusCircle}</Icon></button>
          <div className="absolute left-[5px] flex gap-1 text-[8px] leading-3 text-[#d1d1d1]" style={{ top: top(491) }}>
            <span>RSI 다이버전스 지표</span>
            <span className="text-[#8f8f8f]">14 close</span>
            <span className="text-[#2f5fe0]">58.93</span>
            <span>Ø</span><span>Ø</span><span>Ø</span><span>Ø</span>
          </div>
          <Marker x={703} y={499} className="bg-[#f23645]">Bear</Marker>
          <Marker x={747} y={508} className="bg-[#f23645]">Bear</Marker>
          <Marker x={279} y={565} className="bg-[#4caf50]">Bull</Marker>
          <a href="#tradingview" className="absolute bottom-[5px] left-[7px] flex items-center gap-[5px] font-[Inter,sans-serif] text-[12px] font-bold leading-4 text-[#dedede]">
            <svg width="19" height="10" viewBox="0 0 19 10" fill="currentColor" aria-hidden="true"><path d="M0 0h7.500v9.500H3.700V3.800H0zM14.500 9.500H10L14 0h4.500z" /><circle cx="10.500" cy="2" r="2" /></svg>
            TradingView
          </a>
        </div>
        <PriceAxis />
      </div>
      <TimeAxis />
      <div className="flex h-6 items-center border-t border-[#242424] pl-[9px] pr-[6px] text-[9px] font-medium text-[#c9c9c9]">
        {["1D", "5D", "1M", "3M", "6M", "YTD", "1Y", "5Y", "전체"].map((r) => <button key={r} type="button" className="mr-[6px] whitespace-nowrap">{r}</button>)}
        <Sep />
        <Tool label="날짜로 이동" icon={I.goto} size={17} className="ml-[6px]" />
        <button type="button" className="ml-auto">20:59:38 UTC+9</button>
      </div>
      <div className="flex h-[27px] items-center border-t-3 border-[#2e2e2e] pl-[10px] pr-[5px] text-[9px] font-medium text-[#d1d1d1]">
        {["암호화폐 페어 스크리너", "Pine 에디터", "전략테스터", "리플레이 트레이딩 패널", "트레이딩패널"].map((t) => <button key={t} type="button" className="mr-[22px] whitespace-nowrap">{t}</button>)}
        <Tool label="패널 열기" icon={I.chevUp} size={16} className="ml-auto w-[23px]" />
        <Tool label="패널 최대화" icon={I.maxi} size={16} className="w-[21px]" />
      </div>
    </section>
  );
}

function Taskbar() {
  return (
    <footer className="flex h-[25px] items-stretch bg-[linear-gradient(90deg,#203840,#20363f_35%,#1e2f40_65%,#1a2746)] text-white">
      <Tool label="시작" className="w-8"><svg width="10" height="10" viewBox="0 0 10 10" fill="#fff" aria-hidden="true"><path d="M0 1.300L4.500.7v4H0zM5 .6L10 0v4.700H5zM0 5.200h4.500v4L0 8.700zM5 5.200h5V10l-5-.7z" /></svg></Tool>
      <Tool label="Edge" className="w-[30px] border-b-2 border-[#76b9ed] bg-[#46606a]">
        <svg width="16" height="16" viewBox="0 0 16 16" aria-hidden="true"><circle cx="8" cy="8" r="7.500" fill="#1677c8" /><path d="M.7 7C2-1.500 15-1.500 15.500 7c0 3-3.500 4-5.500 3 1-1 .5-5-3.500-5C3.500 5 1.500 6 .7 7z" fill="#39c2a0" /><path d="M6.500 7C4 10 7 14.500 13 13.500 10 17 1.500 15.500 1 9c1-3 4-3.500 5.500-2z" fill="#124f9c" /></svg>
      </Tool>
      <Tool label="Chrome" className="mx-[3px] w-[25px] border-b-2 border-[#76b9ed]">
        <svg width="15" height="15" viewBox="0 0 16 16" aria-hidden="true"><circle cx="8" cy="8" r="7.500" fill="#fbc116" /><path d="M8 .5A7.500 7.500 0 0114.500 4.300H8A3.700 3.700 0 004.500 7L1.500 4.300A7.500 7.500 0 018 .5z" fill="#e33b2e" /><path d="M1.500 4.300L4.800 9.800a3.700 3.700 0 004 1.800L7.300 15.500A7.500 7.500 0 011.500 4.300z" fill="#229342" /><circle cx="8" cy="8" r="3.500" fill="#fff" /><circle cx="8" cy="8" r="2.700" fill="#1a73e8" /></svg>
      </Tool>
      <Tool label="파일 탐색기" className="ml-[3px] w-[25px]">
        <svg width="14" height="12" viewBox="0 0 14 12" aria-hidden="true"><path d="M0 1h5l1 1.500h8V11H0z" fill="#e9b93c" /><rect y="3.500" width="14" height="8" fill="#fbd970" /><path d="M2 11.500V7.500h10v4H9.500V10h-5v1.500z" fill="#3f8fd2" /></svg>
      </Tool>
      <div className="ml-auto flex items-center">
        <Tool label="숨겨진 아이콘" className="w-5"><Icon size={11} w={2.5}>{I.chevUp}</Icon></Tool>
        <Tool label="네트워크" className="ml-[12px] w-[15px]"><svg width="11" height="10" viewBox="0 0 11 10" fill="none" stroke="#fff" aria-hidden="true"><path d="M3 1.500h7.500v5H3zM4 9.500h5M6.500 6.500v3M.5.5h2v3h-2zM1.500 3.500V9" strokeWidth=".8" /></svg></Tool>
        <Tool label="볼륨" className="w-[15px]"><svg width="9" height="9" viewBox="0 0 9 9" stroke="#ddd" aria-hidden="true"><circle cx="4.500" cy="4.500" r="3.800" fill="#6b7686" /><path d="M3 3l3 3M6 3L3 6" /></svg></Tool>
        <Tool label="입력기" className="ml-[4px] w-[10px]"><svg width="9" height="9" viewBox="0 0 9 9" aria-hidden="true"><rect width="9" height="9" fill="#fff" /><path d="M1.500 2.500h3M3 1v1M6.500 1v4M6.500 3h1.500M2 6.500h5v2" stroke="#222" fill="none" strokeWidth=".8" /><circle cx="3" cy="4.300" r="1" fill="none" stroke="#222" strokeWidth=".7" /></svg></Tool>
        <div className="ml-[7px] w-[48px] whitespace-nowrap text-center text-[8px] leading-[11px]">오후 8:59<br />2025-05-11</div>
        <Tool label="알림 센터" className="ml-[5px] w-[24px]">
          <span className="relative block h-3 w-4"><svg width="11" height="10" viewBox="0 0 11 10" aria-hidden="true"><path d="M0 0h11v8H6L4 10V8H0z" fill="#fff" /><path d="M2 2.500h7M2 4.200h7M2 5.900h4" stroke="#1d2a48" strokeWidth=".8" /></svg><span className="absolute left-[6px] top-[3px] flex size-[10px] items-center justify-center rounded-full bg-[#444] text-[7px] font-bold">2</span></span>
        </Tool>
        <span className="mx-[2px] h-full w-px bg-[#4b5670]" />
      </div>
    </footer>
  );
}

export default function App() {
  return (
    <div className="flex min-h-screen flex-col overflow-hidden bg-[#0f0f0f] font-['Roboto','Noto_Sans_CJK_KR',sans-serif]">
      <TabStrip />
      <AddressBar />
      <main className="flex flex-1">
        <div className="flex min-w-0 flex-1 flex-col">
          <TopToolbar />
          <div className="flex flex-1">
            <DrawingTools />
            <Chart />
            <RightTools />
          </div>
        </div>
        <EdgeSidebar />
      </main>
      <Taskbar />
    </div>
  );
}
